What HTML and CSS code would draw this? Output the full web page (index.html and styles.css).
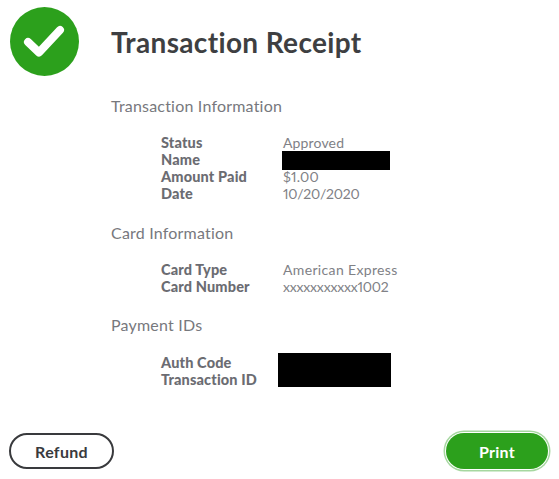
FILE: index.html
```
<!DOCTYPE html>
<html lang="en">
<head>
<meta charset="utf-8">
<title>Transaction Receipt</title>
<link rel="stylesheet" href="styles.css">
</head>
<body>
<main class="receipt">
  <header class="head">
    <svg class="check" viewBox="0 0 69 69" aria-hidden="true"><circle cx="34.5" cy="34.5" r="34.5" fill="#2ca01c"/><path d="M18 35L29 45.500L50 23" fill="none" stroke="#fff" stroke-width="8" stroke-linecap="round" stroke-linejoin="round"/></svg>
    <h1 class="title">Transaction Receipt</h1>
  </header>
  <section class="section sec-first">
    <h2 class="sec-title">Transaction Information</h2>
    <dl class="rows">
      <dt>Status</dt><dd>Approved</dd>
      <dt>Name</dt><dd class="has-redact"><span class="redact redact-name"></span></dd>
      <dt>Amount Paid</dt><dd>$1.00</dd>
      <dt>Date</dt><dd class="tight">10/20/2020</dd>
    </dl>
  </section>
  <section class="section sec-card">
    <h2 class="sec-title">Card Information</h2>
    <dl class="rows">
      <dt>Card Type</dt><dd class="wide">American Express</dd>
      <dt>Card Number</dt><dd class="tight">xxxxxxxxxxx1002</dd>
    </dl>
  </section>
  <section class="section sec-ids">
    <h2 class="sec-title">Payment IDs</h2>
    <dl class="rows rows-ids">
      <dt>Auth Code</dt><dd class="has-redact"><span class="redact redact-ids"></span></dd>
      <dt>Transaction ID</dt><dd></dd>
    </dl>
  </section>
  <footer class="actions">
    <button class="btn btn-refund" type="button">Refund</button>
    <button class="btn btn-print" type="button">Print</button>
  </footer>
</main>
</body>
</html>
```
FILE: styles.css
```
* { box-sizing: border-box; }
html, body { margin: 0; padding: 0; background: #fff; }
body { font-family: Lato, "Open Sans", sans-serif; color: #393a3d; }
.receipt { width: 559px; height: 479px; padding: 7px 9px 0 9px; display: flex; flex-direction: column; }
.head { display: flex; align-items: center; gap: 32px; height: 69px; padding-left: 1px; }
.check { width: 69px; height: 69px; flex: none; }
.title { margin: 0; font-size: 28px; font-weight: 700; line-height: 36px; letter-spacing: .35px; color: #3e3f42; }
.section { padding-left: 102px; }
.sec-first { margin-top: 20px; }
.sec-card { margin-top: 21px; }
.sec-ids { margin-top: 20px; }
.sec-title { margin: 0; font-size: 16px; font-weight: 400; line-height: 20px; color: #77787d; letter-spacing: .2px; }
.rows { margin: 18px 0 0 50px; display: grid; grid-template-columns: 122px 1fr; grid-auto-rows: 17px; }
.rows-ids { margin-top: 19px; }
.rows dt { font-size: 14.500px; font-weight: 900; line-height: 17px; color: #6b6c72; letter-spacing: .15px; }
.rows dd { margin: 0; font-size: 14px; font-weight: 400; line-height: 17px; color: #808186; position: relative; letter-spacing: .15px; font-variant-numeric: proportional-nums; }
.rows dd.tight { letter-spacing: -.2px; }
.rows dd.wide { letter-spacing: .35px; }
.redact { position: absolute; background: #000; display: block; }
.redact-name { left: -1px; top: 0; width: 108px; height: 19px; }
.redact-ids { left: -5px; top: -1px; width: 113px; height: 34px; }
.actions { display: flex; justify-content: space-between; align-items: center; margin-top: 45px; }
.btn { font-family: inherit; font-size: 16px; font-weight: 700; border-radius: 18px; height: 36px; cursor: pointer; padding: 0; letter-spacing: .3px; }
.btn-refund { width: 105px; background: #fff; border: 2px solid #393a3d; color: #393a3d; }
.btn-print { width: 102px; margin-right: 2px; background: #2ca01c; border: none; color: #fff; box-shadow: 0 0 0 1px #fff, 0 0 0 2.500px #a6d7a0; }
```
